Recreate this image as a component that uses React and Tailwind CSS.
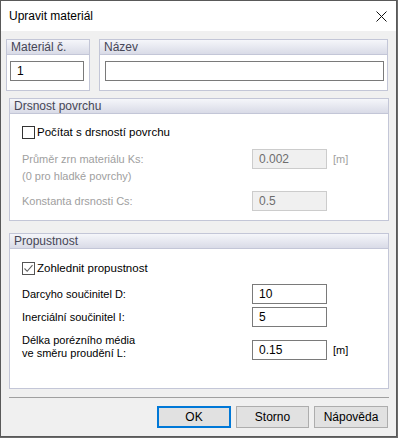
import React from "react";

const font = { fontFamily: '"Liberation Sans", Arial, sans-serif' };

function GroupHeader({ children }) {
  return (
    <div className="h-[15px] border-b border-[#c3c6d7] bg-gradient-to-b from-[#f5f6fa] to-[#d9dbe7] pl-[4px] text-[12px] leading-[15px] text-[#464656]">
      {children}
    </div>
  );
}

function Input({ value, disabled, className = "" }) {
  return (
    <div
      className={
        "flex h-[20px] items-center border pl-[6px] text-[12px] " +
        (disabled
          ? "border-[#cccccc] bg-[#f0f0f0] text-[#6d6d6d] "
          : "border-[#7a7a7a] bg-white text-black ") +
        className
      }
    >
      {value}
    </div>
  );
}

function Checkbox({ checked }) {
  return (
    <div
      className={
        "flex h-[13px] w-[13px] shrink-0 items-center justify-center border bg-white " +
        (checked ? "border-[#555555]" : "border-[#333333]")
      }
    >
      {checked && (
        <svg width="11" height="11" viewBox="0 0 11 11">
          <path d="M1.5 5.5 L4.2 8.3 L9.5 2.2" fill="none" stroke="#606060" strokeWidth="1.1" />
        </svg>
      )}
    </div>
  );
}

export default function App() {
  return (
    <div className="h-[438px] w-[398px] bg-[#6b6b6b]" style={font}>
      <div className="flex h-[437px] w-[397px] flex-col border border-[#595959] bg-[#f0f0f0]">
        {/* title bar */}
        <div className="flex h-[30px] items-center justify-between bg-white pl-[8px] pr-[9px]">
          <span className="text-[12px] text-black">Upravit materiál</span>
          <svg width="11" height="11" viewBox="0 0 11 11">
            <path d="M0.5 0.5 L10.5 10.5 M10.5 0.5 L0.5 10.5" stroke="#111" strokeWidth="1" />
          </svg>
        </div>

        {/* body */}
        <div className="flex flex-col">
          {/* row 1 */}
          <div className="ml-[5px] mt-[8px] flex gap-[9px]">
            <div className="flex h-[52px] w-[84px] flex-col border border-[#c3c6d7] bg-white">
              <GroupHeader>Materiál č.</GroupHeader>
              <div className="px-[3px] pt-[6px]">
                <Input value="1" className="w-[74px]" />
              </div>
            </div>
            <div className="flex h-[52px] w-[289px] flex-col border border-[#c3c6d7] bg-white">
              <GroupHeader>Název</GroupHeader>
              <div className="pl-[5px] pt-[6px]">
                <Input value="" className="w-[279px]" />
              </div>
            </div>
          </div>

          {/* Drsnost povrchu */}
          <div className="ml-[8px] mt-[7px] flex h-[123px] w-[380px] flex-col border border-[#c3c6d7] bg-white">
            <GroupHeader>Drsnost povrchu</GroupHeader>
            <div className="flex flex-col pl-[12px] text-[11px]">
              <div className="mt-[12px] flex h-[13px] items-center gap-[2px] text-[11.5px]">
                <Checkbox />
                <span className="text-black">Počítat s drsností povrchu</span>
              </div>
              <div className="mt-[10px] flex h-[20px] items-center">
                <span className="w-[230px] text-[#a0a0a0]">Průměr zrn materiálu Ks:</span>
                <Input value="0.002" disabled className="w-[75px]" />
                <span className="ml-[6px] text-[#a0a0a0]">[m]</span>
              </div>
              <div className="leading-[14px] text-[#a0a0a0]">(0 pro hladké povrchy)</div>
              <div className="mt-[8px] flex h-[20px] items-center">
                <span className="w-[230px] text-[#a0a0a0]">Konstanta drsnosti Cs:</span>
                <Input value="0.5" disabled className="w-[75px]" />
              </div>
            </div>
          </div>

          {/* Propustnost */}
          <div className="ml-[8px] mt-[12px] flex h-[156px] w-[380px] flex-col border border-[#c3c6d7] bg-white">
            <GroupHeader>Propustnost</GroupHeader>
            <div className="flex flex-col pl-[12px] text-[11px] text-black">
              <div className="mt-[13px] flex h-[13px] items-center gap-[2px] text-[11.5px]">
                <Checkbox checked />
                <span>Zohlednit propustnost</span>
              </div>
              <div className="mt-[9px] flex h-[20px] items-center">
                <span className="w-[230px]">Darcyho součinitel D:</span>
                <Input value="10" className="w-[75px]" />
              </div>
              <div className="mt-[3px] flex h-[20px] items-center">
                <span className="w-[230px]">Inerciální součinitel I:</span>
                <Input value="5" className="w-[75px]" />
              </div>
              <div className="mt-[7px] flex items-end">
                <span className="w-[230px] leading-[13px]">
                  Délka porézního média
                  <br />
                  ve směru proudění L:
                </span>
                <div className="flex items-center">
                  <Input value="0.15" className="w-[75px]" />
                  <span className="ml-[6px]">[m]</span>
                </div>
              </div>
            </div>
          </div>

          {/* separator */}
          <div className="ml-[8px] mt-[8px] h-[2px] w-[380px] border-t border-[#a0a0a0] border-b-white" />

          {/* buttons */}
          <div className="mt-[7px] flex justify-end gap-[5px] pr-[8px] text-[12px] text-black">
            <button className="h-[22px] w-[74px] border-2 border-[#0078d7] bg-[#e1e1e1]">OK</button>
            <button className="h-[22px] w-[73px] border border-[#adadad] bg-[#e1e1e1]">Storno</button>
            <button className="h-[22px] w-[74px] border border-[#adadad] bg-[#e1e1e1]">Nápověda</button>
          </div>
        </div>
      </div>
    </div>
  );
}
